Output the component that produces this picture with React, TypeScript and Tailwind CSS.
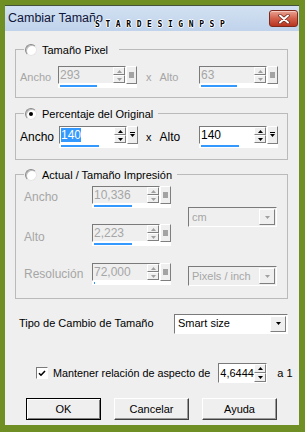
import type { ReactNode } from "react"

const raised = "border border-t-white border-l-white border-r-[#7f7f7f] border-b-[#7f7f7f] bg-[#efefef]"
const sunken = "border border-t-[#7a7a7a] border-l-[#7a7a7a] border-r-white border-b-white"

function Tri({ up, color }: { up?: boolean; color: string }) {
  return (
    <svg width="5" height="3" viewBox="0 0 5 3">
      <path d={up ? "M2.5 0L5 3H0Z" : "M0 0H5L2.5 3Z"} fill={color} />
    </svg>
  )
}

function Radio({ checked }: { checked?: boolean }) {
  return (
    <span className="flex h-[12px] w-[12px] items-center justify-center rounded-full border border-t-[#8a8a8a] border-l-[#8a8a8a] border-r-[#e6e6e6] border-b-[#e6e6e6] bg-white shadow-[inset_1px_1px_0_#bdbdbd]">
      {checked && <span className="h-[4px] w-[4px] rounded-full bg-black" />}
    </span>
  )
}

function Spin({ disabled }: { disabled?: boolean }) {
  const c = disabled ? "#a0a0a0" : "#000"
  return (
    <div className="flex w-[12px] flex-col">
      <div className={`flex flex-1 items-center justify-center ${raised}`}>
        <Tri up color={c} />
      </div>
      <div className={`flex flex-1 items-center justify-center ${raised}`}>
        <Tri color={c} />
      </div>
    </div>
  )
}

function Extra({ disabled }: { disabled?: boolean }) {
  return (
    <div className={`flex w-[11px] items-center justify-center ${raised}`}>
      {disabled ? (
        <span className="h-[6px] w-[5px] bg-[#a3a3a3]" />
      ) : (
        <svg width="5" height="6" viewBox="0 0 5 6">
          <rect x="0" y="0" width="5" height="1" fill="#000" />
          <path d="M0 2H5L2.5 5Z" fill="#000" />
        </svg>
      )}
    </div>
  )
}

function Field({
  value,
  disabled,
  selected,
  barClass,
}: {
  value: string
  disabled?: boolean
  selected?: boolean
  barClass: string
}) {
  return (
    <div className="flex h-[22px] w-[79px] flex-col">
      <div className="flex h-[18px]">
        <div className={`flex flex-1 ${sunken} ${disabled ? "bg-[#efefef]" : "bg-white"}`}>
          <div className="flex flex-1 items-center pl-[1px] text-[12px] leading-[14px]">
            <span
              className={
                selected ? "bg-[#3399ff] text-white" : disabled ? "text-[#a6a6a6]" : "text-black"
              }
            >
              {value}
            </span>
          </div>
          <Spin disabled={disabled} />
        </div>
        <Extra disabled={disabled} />
      </div>
      <div className="flex h-[4px] flex-col bg-white pl-[2px] pt-[1px]">
        <div className={`h-[2px] bg-[#3399ff] ${barClass}`} />
      </div>
    </div>
  )
}

function Select({ value, disabled, className }: { value: string; disabled?: boolean; className: string }) {
  return (
    <div className={`flex h-[20px] ${sunken} ${disabled ? "bg-[#efefef]" : "bg-white"} ${className}`}>
      <span className={`flex flex-1 items-center pl-[3px] text-[11px] ${disabled ? "text-[#a6a6a6]" : "text-black"}`}>
        {value}
      </span>
      <div className={`m-[1px] flex w-[16px] items-center justify-center ${raised}`}>
        <Tri color={disabled ? "#a0a0a0" : "#000"} />
      </div>
    </div>
  )
}

function Group({
  label,
  checked,
  legendPad,
  className,
  children,
}: {
  label: string
  checked?: boolean
  legendPad: string
  className: string
  children: ReactNode
}) {
  return (
    <div className={`relative border border-[#bababa] ${className}`}>
      <div className={`absolute -top-[7px] left-[8px] flex h-[14px] items-center gap-[5px] bg-[#efefef] pl-[1px] text-[11px] text-black ${legendPad}`}>
        <Radio checked={checked} />
        <span>{label}</span>
      </div>
      {children}
    </div>
  )
}

function Button({ label, primary }: { label: string; primary?: boolean }) {
  return (
    <div
      className={`flex h-[22px] w-[75px] items-center justify-center bg-[#efefef] text-[11px] text-black ${
        primary
          ? "border border-black shadow-[inset_1px_1px_0_white,inset_-1px_-1px_0_#7f7f7f]"
          : "border border-t-white border-l-white border-r-[#404040] border-b-[#404040] shadow-[inset_-1px_-1px_0_#9a9a9a]"
      }`}
    >
      {label}
    </div>
  )
}

export default function App() {
  return (
    <div className="h-[432px] w-[305px] bg-[#6f8e23] pb-[7px] pl-[5px] pr-[6px] pt-[5px] font-['Liberation_Sans',Arial,sans-serif]">
      <div className="flex h-full flex-col bg-[#efefef]">
        {/* title bar */}
        <div className="relative flex h-[26px] items-center border-t border-[#45533a] bg-gradient-to-b from-[#d2e1f2] to-[#c0d3eb] pl-[3px] pr-[1px]">
          <span className="text-[12.5px] text-[#10153a]">Cambiar Tamaño</span>
          <span className="absolute left-[90px] top-[15px] font-['DejaVu_Sans_Mono',monospace] text-[8px] font-bold leading-[8px] tracking-[5.6px] text-black [text-shadow:1px_0_0_#fff,-1px_0_0_#fff,0_1px_0_#fff,0_-1px_0_#fff]">
            STARDESIGNPSP
          </span>
          <div className="ml-auto flex h-[17px] w-[29px] items-center justify-center rounded-[3px] border border-[#7d2a1d] bg-gradient-to-b from-[#e9a394] via-[#d2604b] to-[#b8321f] shadow-[inset_0_1px_0_#f5c9bf]">
            <svg width="12" height="10" viewBox="0 0 12 10">
              <path d="M2 1.5L10 8.5M10 1.5L2 8.5" stroke="#6b2318" strokeWidth="3.4" strokeLinecap="round" />
              <path d="M2 1.5L10 8.5M10 1.5L2 8.5" stroke="#fff" strokeWidth="2" strokeLinecap="round" />
            </svg>
          </div>
        </div>

        {/* body */}
        <div className="flex flex-1 flex-col pl-[10px] pr-[11px] text-[11px]">
          <Group label="Tamaño Pixel" legendPad="pr-[11px]" className="mt-[18px] h-[49px] pl-[4px] pr-[9px] pt-[16px]">
            <div className="flex items-center">
              <span className="w-[38px] text-[#a6a6a6]">Ancho</span>
              <Field value="293" disabled barClass="w-[37px]" />
              <span className="ml-[9px] text-[#a6a6a6]">x</span>
              <span className="ml-[8px] text-[#a6a6a6]">Alto</span>
              <div className="ml-auto">
                <Field value="63" disabled barClass="w-[36px]" />
              </div>
            </div>
          </Group>

          <Group label="Percentaje del Original" checked legendPad="pr-[5px]" className="mt-[15px] h-[47px] pl-[4px] pr-[9px] pt-[12px]">
            <div className="flex items-center">
              <span className="w-[39px] text-[12px] text-black">Ancho</span>
              <Field value="140" selected barClass="w-[38px]" />
              <span className="ml-[8px] text-black">x</span>
              <span className="ml-[8px] text-[12px] text-black">Alto</span>
              <div className="ml-auto">
                <Field value="140" barClass="w-[38px]" />
              </div>
            </div>
          </Group>

          <Group label="Actual / Tamaño Impresión" legendPad="pr-[5px]" className="mt-[14px] flex h-[125px] pl-[8px] pt-[11px]">
            <div className="flex flex-col gap-[16px]">
              <div className="flex items-center">
                <span className="w-[68px] text-[12px] text-[#a6a6a6]">Ancho</span>
                <Field value="10,336" disabled barClass="w-[38px]" />
              </div>
              <div className="flex items-center">
                <span className="w-[68px] pt-[3px] text-[12px] text-[#a6a6a6]">Alto</span>
                <Field value="2,223" disabled barClass="w-[38px]" />
              </div>
              <div className="mt-[1px] flex items-center">
                <span className="w-[68px] text-[12px] text-[#a6a6a6]">Resolución</span>
                <Field value="72,000" disabled barClass="w-[1px]" />
              </div>
            </div>
            <div className="ml-[17px] flex flex-col">
              <Select value="cm" disabled className="mt-[21px] w-[89px]" />
              <Select value="Pixels / inch" disabled className="mt-[39px] w-[89px]" />
            </div>
          </Group>

          <div className="mt-[15px] flex h-[19px] items-center">
            <span className="ml-[4px] text-black">Tipo de Cambio de Tamaño</span>
            <Select value="Smart size" className="ml-auto h-[19px] w-[114px]" />
          </div>

          <div className="mt-[30px] flex h-[20px] items-center whitespace-nowrap">
            <span className={`ml-[21px] flex h-[12px] w-[12px] shrink-0 items-center justify-center bg-white ${sunken}`}>
              <svg width="8" height="7" viewBox="0 0 8 7">
                <path d="M1 3.2L3 5.2L7 1" stroke="#000" strokeWidth="1.6" fill="none" />
              </svg>
            </span>
            <span className="ml-[5px] text-[10.8px] text-black">Mantener relación de aspecto de</span>
            <div className={`ml-[8px] flex h-[20px] w-[49px] shrink-0 bg-white ${sunken}`}>
              <span className="flex flex-1 items-center pl-[1px] text-[11px] text-black">4,6444</span>
              <Spin />
            </div>
            <span className="ml-[10px] text-black">a 1</span>
          </div>

          <div className="mt-[15px] flex gap-[13px] pl-[11px]">
            <Button label="OK" primary />
            <Button label="Cancelar" />
            <Button label="Ayuda" />
          </div>
        </div>
      </div>
    </div>
  )
}
